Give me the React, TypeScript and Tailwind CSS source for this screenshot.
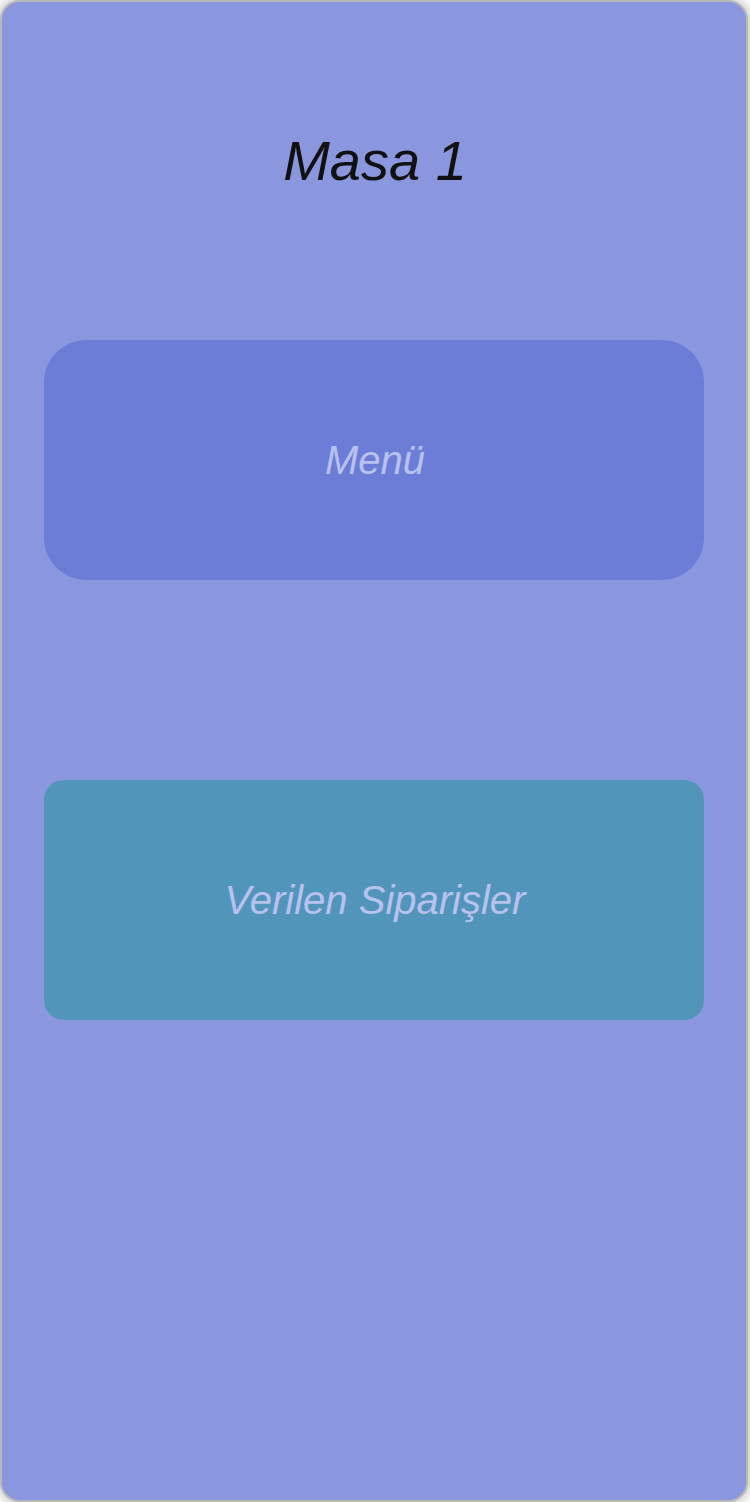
export default function App() {
  return (
    <div className="min-h-screen overflow-hidden bg-white font-['Liberation_Sans',Arial,sans-serif] italic">
      <main className="mr-0.5 flex min-h-screen flex-col rounded-[20px] border-2 border-[#b8b8b8] bg-[#8a96de] px-[42px] pt-[127px] shadow-[0_0_12px_2px_rgba(0,0,0,0.25)]">
        <h1 className="pl-0.5 text-center text-[56px] leading-[64px] text-[#111111]">Masa 1</h1>
        <button type="button" className="mt-[147px] h-[240px] w-full rounded-[42px] bg-[#6b7dd7] pl-0.5 text-[40px] leading-[48px] text-[#b9c1ed]">
          Menü
        </button>
        <button type="button" className="mt-[200px] h-[240px] w-full rounded-[20px] bg-[#5295bb] pl-0.5 text-[40px] leading-[48px] text-[#b9c1ed]">
          Verilen Siparişler
        </button>
      </main>
    </div>
  );
}
